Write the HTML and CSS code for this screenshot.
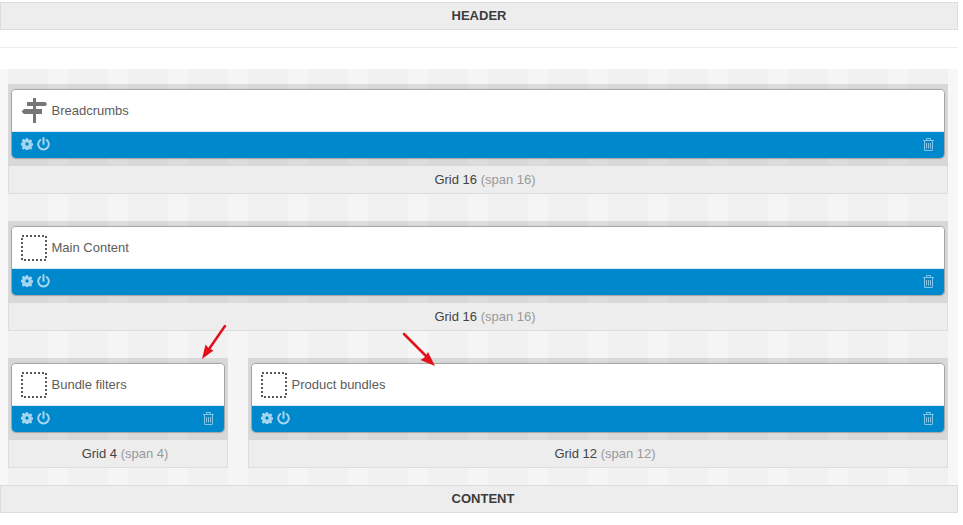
FILE: index.html
```html
<!DOCTYPE html>
<html lang="en">
<head>
<meta charset="utf-8">
<title>Layout</title>
<link rel="stylesheet" href="styles.css">
</head>
<body>
<svg width="0" height="0" class="defs">
  <defs>
    <symbol id="gear" viewBox="0 0 14 14">
      <path fill-rule="evenodd" d="M5.600.4h2.800l.3 1.800 1 .4 1.500-1 2 1.900-1.100 1.500.4 1 1.800.3v2.600l-1.800.3-.4 1 1.100 1.500-2 1.900-1.500-1-1 .4-.3 1.800H5.600l-.3-1.800-1-.4-1.500 1-2-1.900 1.100-1.500-.4-1L-.300 8.300V5.700l1.800-.3.4-1-1.100-1.500 2-1.900 1.500 1 1-.4zM7 5a2 2 0 1 0 0 4 2 2 0 0 0 0-4z"/>
    </symbol>
    <symbol id="power" viewBox="0 0 13 14">
      <path fill="none" stroke="currentColor" stroke-width="2" stroke-linecap="round" d="M6.500 1v6M3.300 3a5.300 5.300 0 1 0 6.400 0"/>
    </symbol>
    <symbol id="trash" viewBox="0 0 11 13">
      <path fill="none" stroke="currentColor" stroke-width="1" d="M0 2.500h11M3.500 2.500V.5h4v2M1.500 2.500v9.500q0 .5.500.5h7q.5 0 .5-.5V2.500M3.500 5v5.500M5.500 5v5.500M7.500 5v5.500"/>
    </symbol>
    <symbol id="dotted" viewBox="0 0 26 26">
      <rect x="1" y="1" width="24" height="24" fill="none" stroke="#5a5a5a" stroke-width="2" stroke-dasharray="2 2"/>
    </symbol>
  </defs>
</svg>

<div class="page">
  <div class="bar bar-top">HEADER</div>
  <div class="spacer"></div>

  <main class="grid">
    <div class="row">
      <section class="cell span-16">
        <div class="slot">
          <div class="card">
            <div class="card-head">
              <svg class="sign" viewBox="0 0 26 26" aria-hidden="true">
                <path fill="#777" d="M12 0h3v4h9.500L26 6l-1.500 2H15v3h6v5h-6v9h-3v-9H3l-2.500-2.500L3 11h9V8H6V4h6z"/>
              </svg>
              <span class="card-title">Breadcrumbs</span>
            </div>
            <div class="card-foot">
              <svg class="ico gear"><use href="#gear"/></svg>
              <svg class="ico power"><use href="#power"/></svg>
              <svg class="ico trash"><use href="#trash"/></svg>
            </div>
          </div>
        </div>
        <div class="cell-label">Grid 16 <span class="muted">(span 16)</span></div>
      </section>
    </div>

    <div class="row">
      <section class="cell span-16">
        <div class="slot">
          <div class="card">
            <div class="card-head">
              <svg class="placeholder"><use href="#dotted"/></svg>
              <span class="card-title">Main Content</span>
            </div>
            <div class="card-foot">
              <svg class="ico gear"><use href="#gear"/></svg>
              <svg class="ico power"><use href="#power"/></svg>
              <svg class="ico trash"><use href="#trash"/></svg>
            </div>
          </div>
        </div>
        <div class="cell-label">Grid 16 <span class="muted">(span 16)</span></div>
      </section>
    </div>

    <div class="row">
      <section class="cell span-4">
        <div class="slot">
          <div class="card">
            <div class="card-head">
              <svg class="placeholder"><use href="#dotted"/></svg>
              <span class="card-title">Bundle filters</span>
            </div>
            <div class="card-foot">
              <svg class="ico gear"><use href="#gear"/></svg>
              <svg class="ico power"><use href="#power"/></svg>
              <svg class="ico trash"><use href="#trash"/></svg>
            </div>
          </div>
        </div>
        <div class="cell-label">Grid 4 <span class="muted">(span 4)</span></div>
      </section>
      <section class="cell span-12">
        <div class="slot">
          <div class="card">
            <div class="card-head">
              <svg class="placeholder"><use href="#dotted"/></svg>
              <span class="card-title">Product bundles</span>
            </div>
            <div class="card-foot">
              <svg class="ico gear"><use href="#gear"/></svg>
              <svg class="ico power"><use href="#power"/></svg>
              <svg class="ico trash"><use href="#trash"/></svg>
            </div>
          </div>
        </div>
        <div class="cell-label">Grid 12 <span class="muted">(span 12)</span></div>
      </section>
    </div>
  </main>

  <div class="bar bar-bottom">CONTENT</div>

  <svg class="arrows" viewBox="0 0 958 525" aria-hidden="true">
    <path class="arrow-line" d="M225 326 209 349"/>
    <path class="arrow-head" d="M202 359l3.500-14.500 3 3.500 5 2.500z"/>
    <path class="arrow-line" d="M404 334 426 356"/>
    <path class="arrow-head" d="M435 366l-14.500-6 4.500-3 3-5z"/>
  </svg>
</div>
</body>
</html>
```

FILE: styles.css
```css
* { box-sizing: border-box; }

html, body {
  margin: 0;
  padding: 0;
  background: #fff;
}

body {
  font-family: "Liberation Sans", Arial, sans-serif;
  font-size: 13px;
  color: #444;
  overflow: hidden;
}

.defs { position: absolute; }

.page {
  position: relative;
  width: 958px;
  height: 525px;
  padding-top: 2px;
}

.bar {
  height: 28px;
  line-height: 26px;
  text-align: center;
  font-weight: 700;
  font-size: 13px;
  color: #3c3c3c;
  background: #ededed;
  border: 1px solid #ddd;
}

.bar-bottom { padding-left: 8px; }

.spacer {
  height: 39px;
  border-top: 18px solid #fff;
  position: relative;
}

.spacer::before {
  content: "";
  display: block;
  height: 1px;
  background: #eee;
  margin-top: -1px;
}

.grid {
  padding: 15px 10px 17px 8px;
  background-color: #f7f7f7;
  background-image: repeating-linear-gradient(to right, #f1f1f1 0, #f1f1f1 40px, #f5f5f5 40px, #f5f5f5 60px);
  background-position: 8px 0;
  background-size: 940px 100%;
  background-repeat: no-repeat;
  display: flex;
  flex-direction: column;
  gap: 27px;
}

.row {
  display: flex;
  gap: 20px;
}

.cell { min-width: 0; }
.span-16 { width: 940px; }
.span-12 { width: 700px; }
.span-4 { width: 220px; }

.slot {
  padding: 6px 4px 8px;
  background: rgba(0, 0, 0, .1);
}

.card {
  border-radius: 4px;
  overflow: hidden;
  background: #fff;
  box-shadow: 0 0 1px 1px rgba(0, 0, 0, .25);
}

.card-head {
  height: 42px;
  display: flex;
  align-items: center;
  padding: 0 9px;
  gap: 4.500px;
  background: #fff;
  border-bottom: 1px solid #d8ecf7;
}

.sign {
  width: 26px;
  height: 26px;
  flex: none;
}

.placeholder {
  width: 26px;
  height: 26px;
  flex: none;
  display: block;
}

.card-title {
  font-size: 13px;
  color: #5c5c5c;
}

.card-foot {
  height: 26px;
  display: flex;
  align-items: center;
  padding: 0 9px 2px 8px;
  background: #0088cc;
  color: #a5d6f0;
}

.ico {
  flex: none;
  display: block;
}

.gear {
  width: 12px;
  height: 12px;
  margin-left: 1px;
  fill: #a5d6f0;
}

.power {
  width: 13px;
  height: 14px;
  margin-left: 4px;
}

.trash {
  width: 11px;
  height: 13px;
  margin-left: auto;
  margin-right: 1px;
  opacity: .8;
}

.cell-label {
  height: 28px;
  line-height: 28px;
  padding-left: 14px;
  text-align: center;
  background: #ededed;
  border: 1px solid #ddd;
  border-top: 0;
  color: #444;
  font-size: 13px;
}

.muted { color: #999; }

.arrows {
  position: absolute;
  left: 0;
  top: 0;
  width: 958px;
  height: 525px;
  pointer-events: none;
}

.arrow-line {
  fill: none;
  stroke: #e3101a;
  stroke-width: 2.500;
  stroke-linecap: round;
}

.arrow-head { fill: #e3101a; }
```
